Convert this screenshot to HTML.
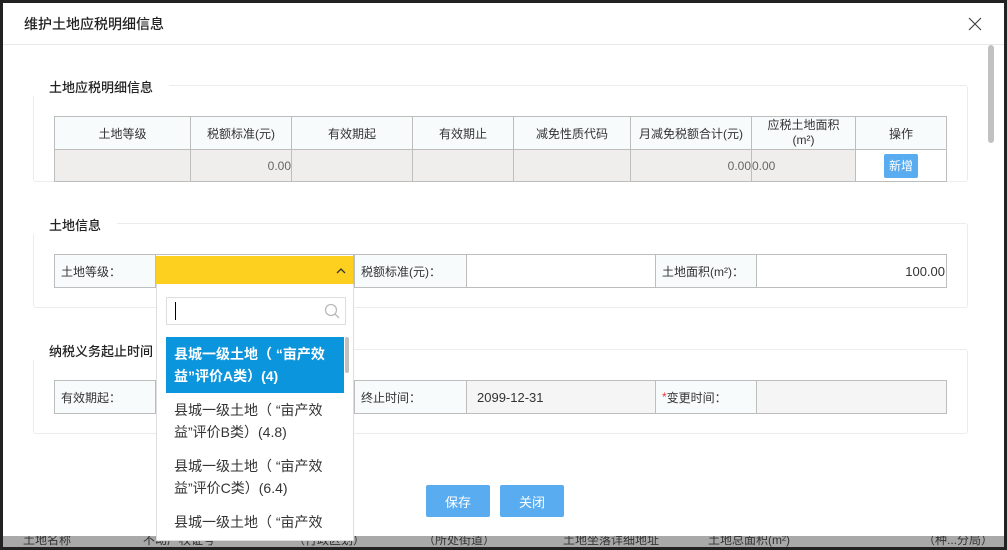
<!DOCTYPE html>
<html><head><meta charset="utf-8"><style>
*{box-sizing:border-box;margin:0;padding:0}
body{width:1007px;height:550px;position:relative;overflow:hidden;background:#222;font-family:"Liberation Sans","Noto Sans CJK SC",sans-serif;font-size:12px;color:#333}
.a{position:absolute}
.dlg{left:3px;top:3px;width:1001px;height:533px;background:#fff}
.bot{left:3px;top:536px;width:1001px;height:11px;background:#a9a9a9;overflow:hidden}
.bot span{position:absolute;top:-5px;font-size:12px;color:#333}
.fs{border:1px solid #ececec;border-radius:3px;background:#fff}
.lg{background:#fff;padding:0 16px;font-size:13px;color:#222;font-weight:500}
table{border-collapse:collapse;position:absolute}
td{border:1px solid #bdbdbd;text-align:center;font-size:12px;color:#333;padding:0}
.h td{background:#f7fbfc;height:33px}
.r td{background:#f0eded;height:32px}
.cell{position:absolute;border:1px solid #bdbdbd;font-size:12px;display:flex;align-items:center;padding-left:6px;color:#333}
.lab{background:#f7fbfc}
.btn{position:absolute;background:#5aacf0;color:#fff;font-size:13px;display:flex;align-items:center;justify-content:center;border-radius:2px}
.it{position:absolute;left:9px;width:178px;height:56px;font-size:14px;line-height:22px;padding:6px 8px;color:#333;overflow:hidden}
</style></head><body>
<div class="a dlg"></div>
<div class="a bot">
<span style="left:20px">土地名称</span><span style="left:140px">不动产权证号</span><span style="left:290px">（行政区划）</span><span style="left:420px">（所处街道）</span><span style="left:560px">土地坐落详细地址</span><span style="left:705px">土地总面积(m²)</span><span style="left:920px">（种...分局）</span>
</div>
<div class="a" style="left:24px;top:14px;font-size:14px;color:#222;font-weight:500">维护土地应税明细信息</div>
<svg class="a" style="left:968px;top:17px" width="14" height="14" viewBox="0 0 14 14"><path d="M1 1L13 13M13 1L1 13" stroke="#444" stroke-width="1.2"/></svg>
<div class="a" style="left:3px;top:44px;width:1001px;height:1px;background:#e8e8e8"></div>
<div class="a" style="left:988px;top:45px;width:6px;height:98px;background:#c1c1c1;border-radius:3px"></div>

<div class="a fs" style="left:33px;top:85px;width:935px;height:97px"></div>
<div class="a lg" style="left:33px;top:77px">土地应税明细信息</div>
<table style="left:54px;top:116px;width:893px">
<tr class="h"><td style="width:136px">土地等级</td><td style="width:101px">税额标准(元)</td><td style="width:121px">有效期起</td><td style="width:101px">有效期止</td><td style="width:117px">减免性质代码</td><td style="width:121px">月减免税额合计(元)</td><td style="width:104px;line-height:15px">应税土地面积<br>(m²)</td><td>操作</td></tr>
<tr class="r"><td></td><td style="text-align:right;color:#666">0.00</td><td></td><td></td><td></td><td style="text-align:right;color:#666">0.00</td><td style="text-align:left;color:#666">0.00</td><td style="background:#fff"><span style="display:inline-block;background:#5aacf0;color:#fff;width:34px;height:24px;line-height:24px;border-radius:2px;font-size:12px">新增</span></td></tr>
</table>

<div class="a fs" style="left:33px;top:223px;width:935px;height:85px"></div>
<div class="a lg" style="left:33px;top:215px">土地信息</div>
<div class="cell lab" style="left:54px;top:254px;width:102px;height:34px">土地等级：</div>
<div class="a" style="left:156px;top:254px;width:198px;height:34px;border:1px solid #bdbdbd;border-left:0"></div>
<div class="a" style="left:156px;top:256px;width:197px;height:28px;background:#fdd01f"></div>
<svg class="a" style="left:336px;top:267px" width="10" height="7" viewBox="0 0 10 7"><path d="M1 6L5 2L9 6" stroke="#333" stroke-width="1.3" fill="none"/></svg>
<div class="cell lab" style="left:354px;top:254px;width:113px;height:34px">税额标准(元)：</div>
<div class="cell" style="left:466px;top:254px;width:190px;height:34px"></div>
<div class="cell lab" style="left:655px;top:254px;width:102px;height:34px">土地面积(m²)：</div>
<div class="cell" style="left:756px;top:254px;width:191px;height:34px;justify-content:flex-end;padding-right:1px;font-size:13px">100.00</div>

<div class="a fs" style="left:33px;top:349px;width:935px;height:85px"></div>
<div class="a lg" style="left:33px;top:341px">纳税义务起止时间</div>
<div class="cell lab" style="left:54px;top:380px;width:102px;height:34px">有效期起：</div>
<div class="cell lab" style="left:354px;top:380px;width:113px;height:34px">终止时间：</div>
<div class="cell" style="left:466px;top:380px;width:190px;height:34px;background:#f5f5f5;padding-left:10px;font-size:13px">2099-12-31</div>
<div class="cell lab" style="left:655px;top:380px;width:102px;height:34px"><span style="color:#e33">*</span>变更时间：</div>
<div class="cell" style="left:756px;top:380px;width:191px;height:34px;background:#f5f5f5"></div>

<div class="btn" style="left:426px;top:485px;width:64px;height:32px">保存</div>
<div class="btn" style="left:500px;top:485px;width:64px;height:32px">关闭</div>

<div class="a" style="left:156px;top:284px;width:198px;height:257px;background:#fff;border:1px solid #ddd;border-top:0;overflow:hidden">
<div class="a" style="left:9px;top:13px;width:180px;height:28px;border:1px solid #ddd"></div>
<div class="a" style="left:18px;top:18px;width:1px;height:18px;background:#000"></div>
<svg class="a" style="left:167px;top:19px" width="16" height="16" viewBox="0 0 16 16"><circle cx="7" cy="7" r="5.5" stroke="#bbb" stroke-width="1.3" fill="none"/><path d="M11 11L15 15" stroke="#bbb" stroke-width="1.3"/></svg>
<div class="it" style="top:53px;background:#0b95dc;color:#fff;font-weight:600">县城一级土地（ “亩产效<br>益”评价A类）(4)</div>
<div class="it" style="top:109px">县城一级土地（ “亩产效<br>益”评价B类）(4.8)</div>
<div class="it" style="top:165px">县城一级土地（ “亩产效<br>益”评价C类）(6.4)</div>
<div class="it" style="top:221px;height:34px">县城一级土地（ “亩产效</div>
<div class="a" style="left:188px;top:53px;width:4px;height:36px;background:#c1c1c1;border-radius:2px"></div>
</div>
</body></html>
